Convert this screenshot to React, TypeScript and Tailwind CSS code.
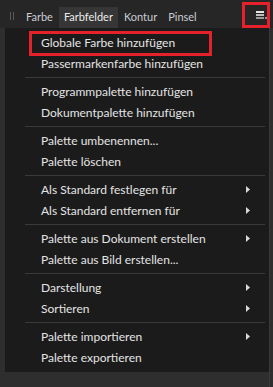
import { FunctionComponent } from "react";

type Entry = { label: string; sub?: boolean } | "sep";

const entries: Entry[] = [
  { label: "Globale Farbe hinzufügen" },
  { label: "Passermarkenfarbe hinzufügen" },
  "sep",
  { label: "Programmpalette hinzufügen" },
  { label: "Dokumentpalette hinzufügen" },
  "sep",
  { label: "Palette umbenennen..." },
  { label: "Palette löschen" },
  "sep",
  { label: "Als Standard festlegen für", sub: true },
  { label: "Als Standard entfernen für", sub: true },
  "sep",
  { label: "Palette aus Dokument erstellen", sub: true },
  { label: "Palette aus Bild erstellen..." },
  "sep",
  { label: "Darstellung", sub: true },
  { label: "Sortieren", sub: true },
  "sep",
  { label: "Palette importieren", sub: true },
  { label: "Palette exportieren" },
];

const Arrow = () => (
  <svg width="4" height="7" viewBox="0 0 4 7" className="block">
    <path d="M0 0 L4 3.5 L0 7 Z" fill="#d8d8d8" />
  </svg>
);

const App: FunctionComponent = () => {
  return (
    <div className="w-[273px] h-[387px] bg-[#2e2e2e] flex flex-col overflow-hidden font-['Lato','Noto_Sans',sans-serif] text-[12px]">
      <header className="relative h-[28px] bg-[#262626] flex flex-row items-end text-[11px]">
        <div className="flex flex-row items-center gap-[2px] ml-[10px] mb-[8px] h-[8px]">
          <div className="w-px h-[8px] bg-[#5a5a5a]" />
          <div className="w-px h-[8px] bg-[#5a5a5a]" />
        </div>
        <div className="ml-[7px] flex flex-row gap-[1px]">
          <div className="h-[21px] flex items-center px-[5px] text-[#c9ccd2]">Farbe</div>
          <div className="h-[21px] flex items-center px-[5px] bg-[#363636] text-[#ececec]">Farbfelder</div>
          <div className="h-[21px] flex items-center px-[5px] text-[#c9ccd2]">Kontur</div>
          <div className="h-[21px] flex items-center px-[5px] text-[#c9ccd2]">Pinsel</div>
        </div>
        <div className="ml-auto mr-[9px] mb-[9px] flex flex-col gap-[1px] w-[8px]">
          <div className="h-[2px] bg-[#e6e6e6]" />
          <div className="h-[2px] bg-[#bdbdbd]" />
          <div className="h-[2px] bg-[#9a9a9a]" />
        </div>
        <div className="absolute right-[6px] bottom-[9px] w-[2px] h-[2px] bg-[#9a9a9a]" />
        <div className="absolute left-[242px] top-[2px] w-[28px] h-[26px] border-[3px] border-[#e5212b]" />
      </header>
      <div className="flex-1 flex flex-row">
        <div className="w-[5px]" />
        <div className="relative w-[264px] h-[344px] bg-[#1b1b1b] pt-[4px] text-[#e4e4e4]">
          {entries.map((e, i) =>
            e === "sep" ? (
              <div key={i} className="h-[7px] flex items-center ml-[20px] mr-[4px]">
                <div className="h-px w-full bg-[#3a3a3a]" />
              </div>
            ) : (
              <div key={i} className="h-[21px] flex flex-row items-center justify-between pl-[36px] pr-[19px] whitespace-nowrap">
                <span>{e.label}</span>
                {e.sub && <Arrow />}
              </div>
            )
          )}
          <div className="absolute left-[24px] top-[3px] w-[183px] h-[25px] border-[3px] border-[#e5212b]" />
        </div>
        <div className="w-px bg-[#3a3a3a]" />
      </div>
    </div>
  );
};

export default App;
